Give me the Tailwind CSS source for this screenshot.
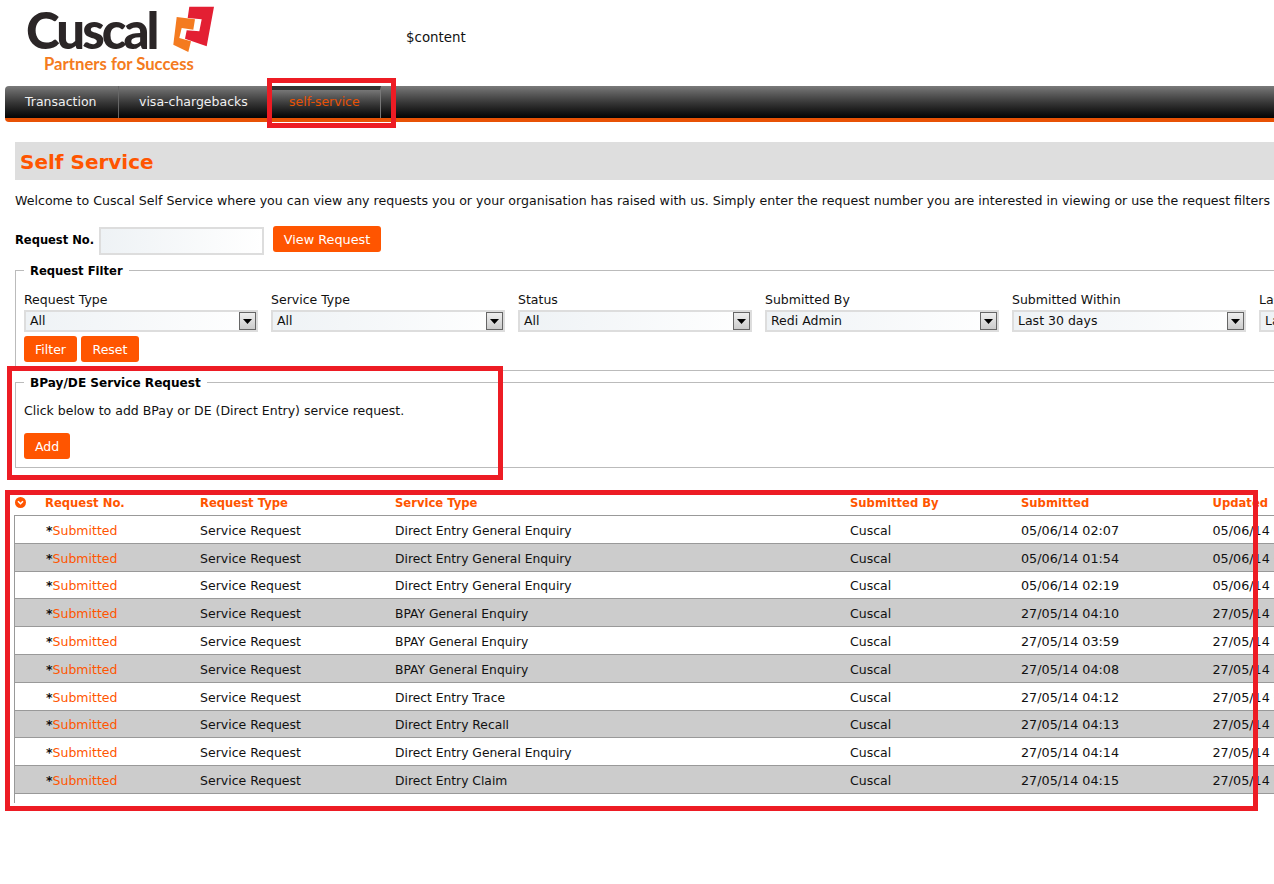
<!DOCTYPE html>
<html lang="en">
<head>
    <meta charset="UTF-8">
    <title>Self Service</title>
    <script src="https://cdn.jsdelivr.net/npm/@tailwindcss/browser@4"></script>
</head>
<body class="relative w-[1274px] h-[884px] overflow-hidden bg-white text-[12.5px] leading-[16px] text-[#111] font-['DejaVu_Sans',Verdana,sans-serif]">

    <!-- logo + header -->
    <header class="relative h-[86px]">
        <div class="absolute left-[26px] top-[6px] font-['Lato',sans-serif] font-black text-[51px] leading-[48px] tracking-[-3px] text-[#2b2627]">Cuscal</div>
        <div class="absolute left-[44px] top-[57px] font-['Lato',sans-serif] font-bold text-[16.7px] leading-[14px] text-[#f47b20]">Partners for Success</div>
        <svg class="absolute left-[160px] top-0" width="64" height="60" viewBox="160 0 64 60">
            <path fill="#e31f33" d="M189.3 6.7 214 6.7 206.7 46.3 185 38.7 186.7 30.3 199.3 31.3 201.7 19.3 187.7 18Z"/>
            <path fill="#f47b20" d="M176.7 17 195 19.3 193.3 29.7 181.7 28 179.3 38 191 41.3 188.3 52 173.3 44.7Z"/>
        </svg>
        <p class="absolute left-[406px] top-[30px] text-[13.4px]">$content</p>
    </header>

    <!-- nav -->
    <nav class="ml-[5px] h-[36px] flex rounded-tl-[4px] rounded-bl-[4px] border-b-[4px] border-[#e85205] bg-gradient-to-b from-[#7a7a7a] to-[#050505] text-[#f0f0f0]">
        <a class="w-[114px] pl-[20px] leading-[31px] border-r border-[#666]">Transaction</a>
        <a class="w-[153px] pl-[20px] leading-[31px]">visa-chargebacks</a>
        <a class="w-[109px] pl-[17px] leading-[23px] border-t-[4px] border-t-[#333] text-[#e85205] border-r border-r-[#777] bg-gradient-to-b from-[#777] to-[#050505]">self-service</a>
    </nav>

    <main class="pl-[15px] w-[1500px]">
        <h1 class="mt-[20px] h-[38px] pl-[5px] bg-[#dedede] text-[20px] leading-[41px] font-bold text-[#ff5500]">Self Service</h1>

        <p class="mt-[13px] whitespace-nowrap text-[12.6px]">Welcome to Cuscal Self Service where you can view any requests you or your organisation has raised with us. Simply enter the request number you are interested in viewing or use the request filters below.</p>

        <div class="mt-[17px] flex items-start">
            <label class="mt-[6px] w-[84px] font-bold text-[11.5px] text-black whitespace-nowrap">Request No.</label>
            <div class="mt-[1px] w-[165px] h-[28px] border-2 border-[#ddd] bg-gradient-to-r from-[#eef2f5] to-white"></div>
            <button class="ml-[9px] w-[108px] h-[26px] pt-[2px] rounded-[3px] bg-[#ff5500] text-[#fff] text-[12.8px]">View Request</button>
        </div>

        <fieldset class="mt-[6px] h-[110px] border border-[#bbb] pl-[8px] pr-0">
            <legend class="px-[6px] pt-[2px] font-bold text-[11.6px] text-black">Request Filter</legend>
            <div class="mt-[13px] flex gap-[13px]">
                <div class="w-[234px] shrink-0">
                    <div>Request Type</div>
                    <div class="mt-[2px] h-[22px] flex items-center justify-between border-2 border-[#ddd] bg-gradient-to-r from-[#eef2f5] to-white pl-[4px] pr-0">All
                        <span class="w-[17px] h-[18px] flex items-center justify-center border border-[#666] bg-gradient-to-b from-[#eee] to-[#ccc]"><svg width="9" height="5"><path d="M0 0H9L4.5 5Z" fill="#000"/></svg></span>
                    </div>
                </div>
                <div class="w-[234px] shrink-0">
                    <div>Service Type</div>
                    <div class="mt-[2px] h-[22px] flex items-center justify-between border-2 border-[#ddd] bg-gradient-to-r from-[#eef2f5] to-white pl-[4px] pr-0">All
                        <span class="w-[17px] h-[18px] flex items-center justify-center border border-[#666] bg-gradient-to-b from-[#eee] to-[#ccc]"><svg width="9" height="5"><path d="M0 0H9L4.5 5Z" fill="#000"/></svg></span>
                    </div>
                </div>
                <div class="w-[234px] shrink-0">
                    <div>Status</div>
                    <div class="mt-[2px] h-[22px] flex items-center justify-between border-2 border-[#ddd] bg-gradient-to-r from-[#eef2f5] to-white pl-[4px] pr-0">All
                        <span class="w-[17px] h-[18px] flex items-center justify-center border border-[#666] bg-gradient-to-b from-[#eee] to-[#ccc]"><svg width="9" height="5"><path d="M0 0H9L4.5 5Z" fill="#000"/></svg></span>
                    </div>
                </div>
                <div class="w-[234px] shrink-0">
                    <div>Submitted By</div>
                    <div class="mt-[2px] h-[22px] flex items-center justify-between border-2 border-[#ddd] bg-gradient-to-r from-[#eef2f5] to-white pl-[4px] pr-0">Redi Admin
                        <span class="w-[17px] h-[18px] flex items-center justify-center border border-[#666] bg-gradient-to-b from-[#eee] to-[#ccc]"><svg width="9" height="5"><path d="M0 0H9L4.5 5Z" fill="#000"/></svg></span>
                    </div>
                </div>
                <div class="w-[234px] shrink-0">
                    <div>Submitted Within</div>
                    <div class="mt-[2px] h-[22px] flex items-center justify-between border-2 border-[#ddd] bg-gradient-to-r from-[#eef2f5] to-white pl-[4px] pr-0">Last 30 days
                        <span class="w-[17px] h-[18px] flex items-center justify-center border border-[#666] bg-gradient-to-b from-[#eee] to-[#ccc]"><svg width="9" height="5"><path d="M0 0H9L4.5 5Z" fill="#000"/></svg></span>
                    </div>
                </div>
                <div class="w-[234px] shrink-0">
                    <div>Last Updated</div>
                    <div class="mt-[2px] h-[22px] flex items-center justify-between border-2 border-[#ddd] bg-gradient-to-r from-[#eef2f5] to-white pl-[4px] pr-0">Last 30 days
                        <span class="w-[17px] h-[18px] flex items-center justify-center border border-[#666] bg-gradient-to-b from-[#eee] to-[#ccc]"><svg width="9" height="5"><path d="M0 0H9L4.5 5Z" fill="#000"/></svg></span>
                    </div>
                </div>
            </div>
            <div class="mt-[4px] flex gap-[4px]">
                <button class="w-[53px] h-[26px] pt-[2px] rounded-[3px] bg-[#ff5500] text-white">Filter</button>
                <button class="w-[58px] h-[26px] pt-[2px] rounded-[3px] bg-[#ff5500] text-white">Reset</button>
            </div>
        </fieldset>

        <fieldset class="mt-[2px] h-[95px] border border-[#bbb] pl-[8px]">
            <legend class="px-[6px] pt-[2px] font-bold text-[12.1px] text-black">BPay/DE Service Request</legend>
            <p class="mt-[12px]">Click below to add BPay or DE (Direct Entry) service request.</p>
            <button class="mt-[14px] block w-[46px] h-[26px] pt-[2px] rounded-[3px] bg-[#ff5500] text-white">Add</button>
        </fieldset>

        <!-- table -->
        <div class="-ml-[1px] mt-[27px] h-[16px] flex font-bold text-[11.6px] text-[#ff5500] relative">
            <svg class="absolute left-[1px] top-[2px]" width="11" height="11" viewBox="0 0 11 11"><circle cx="5.5" cy="5.5" r="5.5" fill="#ff5500"/><path d="M3 4.2 5.5 6.7 8 4.2" fill="none" stroke="#fff" stroke-width="1.6"/></svg>
            <span class="ml-[31px] w-[155px]">Request No.</span><span class="w-[195px]">Request Type</span><span class="w-[455px]">Service Type</span><span class="w-[171px]">Submitted By</span><span class="w-[191.5px]">Submitted</span><span>Updated</span>
        </div>
        <div class="-ml-[1px] mt-[4px] h-[288px] border-l border-t border-[#999]">
            <div class="h-[27.8px] pt-[3px] flex items-center border-b border-[#999]"><span class="ml-[31px] w-[154px]"><b>*</b><span class="text-[#ff5500]">Submitted</span></span><span class="w-[195px]">Service Request</span><span class="w-[455px] text-[12.3px]">Direct Entry General Enquiry</span><span class="w-[171px]">Cuscal</span><span class="w-[191.5px] text-[12.75px]">05/06/14 02:07</span><span class="text-[12.75px]">05/06/14 02:07</span></div>
            <div class="h-[27.8px] pt-[3px] flex items-center border-b border-[#999] bg-[#ccc]"><span class="ml-[31px] w-[154px]"><b>*</b><span class="text-[#ff5500]">Submitted</span></span><span class="w-[195px]">Service Request</span><span class="w-[455px] text-[12.3px]">Direct Entry General Enquiry</span><span class="w-[171px]">Cuscal</span><span class="w-[191.5px] text-[12.75px]">05/06/14 01:54</span><span class="text-[12.75px]">05/06/14 01:54</span></div>
            <div class="h-[27.8px] pt-[3px] flex items-center border-b border-[#999]"><span class="ml-[31px] w-[154px]"><b>*</b><span class="text-[#ff5500]">Submitted</span></span><span class="w-[195px]">Service Request</span><span class="w-[455px] text-[12.3px]">Direct Entry General Enquiry</span><span class="w-[171px]">Cuscal</span><span class="w-[191.5px] text-[12.75px]">05/06/14 02:19</span><span class="text-[12.75px]">05/06/14 02:19</span></div>
            <div class="h-[27.8px] pt-[3px] flex items-center border-b border-[#999] bg-[#ccc]"><span class="ml-[31px] w-[154px]"><b>*</b><span class="text-[#ff5500]">Submitted</span></span><span class="w-[195px]">Service Request</span><span class="w-[455px] text-[12.3px]">BPAY General Enquiry</span><span class="w-[171px]">Cuscal</span><span class="w-[191.5px] text-[12.75px]">27/05/14 04:10</span><span class="text-[12.75px]">27/05/14 04:10</span></div>
            <div class="h-[27.8px] pt-[3px] flex items-center border-b border-[#999]"><span class="ml-[31px] w-[154px]"><b>*</b><span class="text-[#ff5500]">Submitted</span></span><span class="w-[195px]">Service Request</span><span class="w-[455px] text-[12.3px]">BPAY General Enquiry</span><span class="w-[171px]">Cuscal</span><span class="w-[191.5px] text-[12.75px]">27/05/14 03:59</span><span class="text-[12.75px]">27/05/14 03:59</span></div>
            <div class="h-[27.8px] pt-[3px] flex items-center border-b border-[#999] bg-[#ccc]"><span class="ml-[31px] w-[154px]"><b>*</b><span class="text-[#ff5500]">Submitted</span></span><span class="w-[195px]">Service Request</span><span class="w-[455px] text-[12.3px]">BPAY General Enquiry</span><span class="w-[171px]">Cuscal</span><span class="w-[191.5px] text-[12.75px]">27/05/14 04:08</span><span class="text-[12.75px]">27/05/14 04:08</span></div>
            <div class="h-[27.8px] pt-[3px] flex items-center border-b border-[#999]"><span class="ml-[31px] w-[154px]"><b>*</b><span class="text-[#ff5500]">Submitted</span></span><span class="w-[195px]">Service Request</span><span class="w-[455px] text-[12.3px]">Direct Entry Trace</span><span class="w-[171px]">Cuscal</span><span class="w-[191.5px] text-[12.75px]">27/05/14 04:12</span><span class="text-[12.75px]">27/05/14 04:12</span></div>
            <div class="h-[27.8px] pt-[3px] flex items-center border-b border-[#999] bg-[#ccc]"><span class="ml-[31px] w-[154px]"><b>*</b><span class="text-[#ff5500]">Submitted</span></span><span class="w-[195px]">Service Request</span><span class="w-[455px] text-[12.3px]">Direct Entry Recall</span><span class="w-[171px]">Cuscal</span><span class="w-[191.5px] text-[12.75px]">27/05/14 04:13</span><span class="text-[12.75px]">27/05/14 04:13</span></div>
            <div class="h-[27.8px] pt-[3px] flex items-center border-b border-[#999]"><span class="ml-[31px] w-[154px]"><b>*</b><span class="text-[#ff5500]">Submitted</span></span><span class="w-[195px]">Service Request</span><span class="w-[455px] text-[12.3px]">Direct Entry General Enquiry</span><span class="w-[171px]">Cuscal</span><span class="w-[191.5px] text-[12.75px]">27/05/14 04:14</span><span class="text-[12.75px]">27/05/14 04:14</span></div>
            <div class="h-[27.8px] pt-[3px] flex items-center border-b border-[#999] bg-[#ccc]"><span class="ml-[31px] w-[154px]"><b>*</b><span class="text-[#ff5500]">Submitted</span></span><span class="w-[195px]">Service Request</span><span class="w-[455px] text-[12.3px]">Direct Entry Claim</span><span class="w-[171px]">Cuscal</span><span class="w-[191.5px] text-[12.75px]">27/05/14 04:15</span><span class="text-[12.75px]">27/05/14 04:15</span></div>
        </div>
    </main>

    <!-- red annotation boxes -->
    <div class="absolute left-[267px] top-[78px] w-[129px] h-[50px] border-[5px] border-[#ed1c24]"></div>
    <div class="absolute left-[7px] top-[366px] w-[496px] h-[114px] border-[5px] border-[#ed1c24]"></div>
    <div class="absolute left-[5px] top-[490px] w-[1253px] h-[321px] border-[5px] border-[#ed1c24]"></div>
</body>
</html>
